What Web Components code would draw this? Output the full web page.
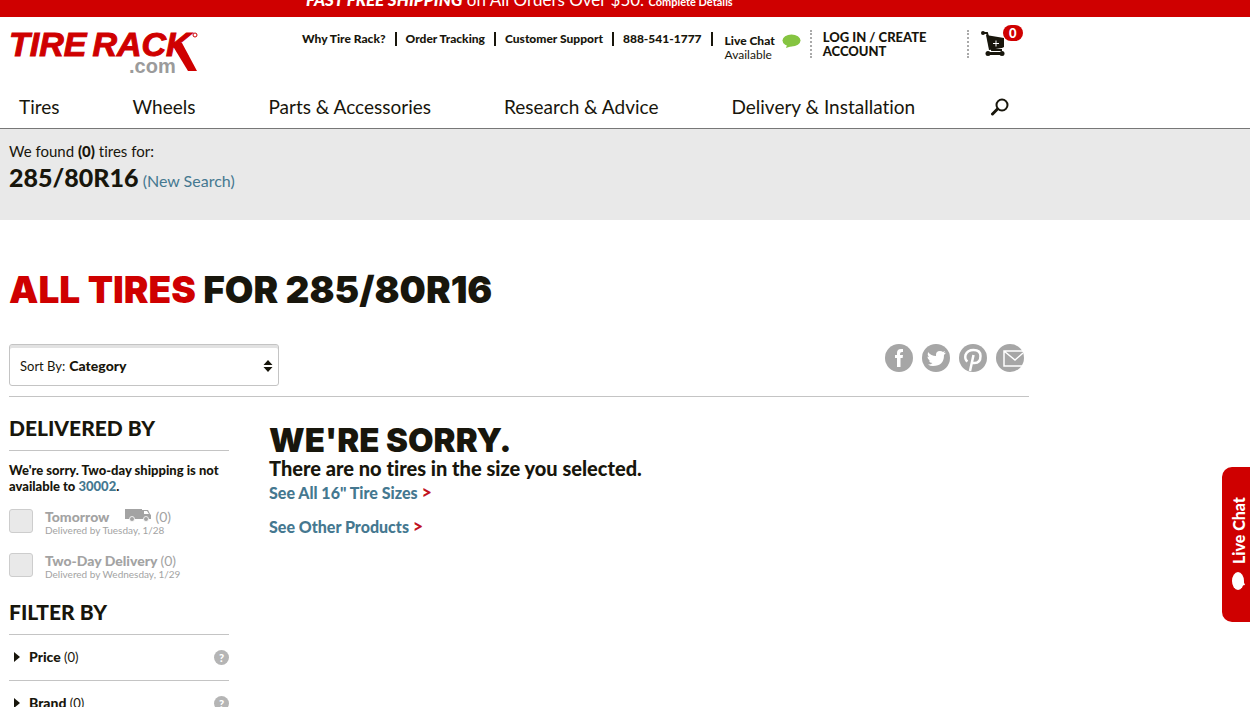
<!DOCTYPE html>
<html lang="en">
<head>
<meta charset="utf-8">
<title>Tire Rack - All Tires for 285/80R16</title>
<style>
html{scrollbar-width:none}
body{margin:0;background:#fff;color:#18160c;font:14px/20px Lato,"Liberation Sans",sans-serif;font-variant-ligatures:none;
--red:#cf0000;--blue:#457890;--rule:#c4c4c4;--mute:#a3a3a3}
</style>
</head>
<body>
<tr-page></tr-page>
<script>
function define(name, html){
  const t=document.createElement('template');
  t.innerHTML='<style>*{box-sizing:border-box}a{color:inherit;text-decoration:none}button,select{font:inherit;color:inherit}svg{display:block;flex:none}</style>'+html;
  customElements.define(name,class extends HTMLElement{
    constructor(){super();this.attachShadow({mode:'open'}).append(t.content.cloneNode(true));}
  });
}

define('tr-promo',`<style>
:host{display:flex;align-items:flex-end;height:17px;overflow:hidden;background:var(--red);color:#fff;padding-bottom:3px}
p{margin:0 0 0 306px;font-size:17px;line-height:24px;white-space:nowrap}
b{font-weight:900;font-style:italic}
a{font-size:11px;font-weight:700}
</style><p><b>FAST FREE SHIPPING</b> on All Orders Over $50. <a href="#details">Complete Details</a></p>`);

define('tr-logo',`<style>
:host{display:block;width:190px}
a{display:grid;color:var(--red);font:italic 700 34px/30px "Liberation Sans",sans-serif}
.name{display:flex;gap:6px;-webkit-text-stroke:1px var(--red)}
.com{grid-area:2/1;font:700 20px/14px "Liberation Sans",sans-serif;color:#9b9b9b;padding-left:120px}
.name,svg{grid-area:1/1}
svg{grid-area:1/1/3/2}
</style><a href="#home" aria-label="Tire Rack home"><span class="name"><span>TIRE</span><span>RACK</span></span>
<svg width="190" height="44" viewBox="0 0 190 44" fill="#cf0000"><path d="M162 14h11l15 28h-9z"/><circle cx="186" cy="6" r="2" fill="none" stroke="#cf0000"/></svg><span class="com">.com</span></a>`);

define('tr-utility',`<style>
:host{display:flex;align-items:flex-start;flex:1;font-size:12px;line-height:14px}
ul{display:flex;margin:0;padding:15px 0 0;list-style:none;font-weight:900;white-space:nowrap}
li{display:flex;padding-right:9px;margin-right:9px;border-right:2px solid #18160c;height:14px;align-items:center}
.chat{display:flex;gap:7px;padding:17px 9px 0 3px}
.chat b{display:block;font-weight:900}
.chat span{white-space:nowrap}
.acct{margin-top:13px;padding-left:11px;width:157px;height:28px;border-left:2px dotted #aaa;font-weight:900;font-size:13px}
.acct a{display:block;width:110px}
.cart{position:relative;margin-top:13px;height:28px;border-left:2px dotted #aaa;padding-left:12px}
.badge{position:absolute;left:34px;top:-5px;width:20px;height:16px;border-radius:8px;background:var(--red);color:#fff;font-weight:900;font-size:13px;line-height:16px;text-align:center}
</style>
<ul><li><a href="#why">Why Tire Rack?</a></li><li><a href="#orders">Order Tracking</a></li><li><a href="#support">Customer Support</a></li><li><a href="tel:8885411777">888-541-1777</a></li></ul>
<a class="chat" href="#chat"><span><b>Live Chat</b>Available</span><svg width="19" height="15" viewBox="0 0 19 15" fill="#85c441"><ellipse cx="9.500" cy="6.500" rx="9" ry="6"/><path d="M5 11l-1 3 6-2z"/></svg></a>
<div class="acct"><a href="#login">LOG IN / CREATE ACCOUNT</a></div>
<a class="cart" href="#cart" aria-label="Cart"><svg width="26" height="28" viewBox="0 0 26 28" fill="#18160c"><path d="M2 3h4l5 17h10" fill="none" stroke="#18160c" stroke-width="2"/><path d="M5 5l18 3v9l-2 1-13 2z"/><circle cx="2" cy="3" r="2"/><circle cx="7" cy="23.500" r="2.500"/><circle cx="21" cy="23.500" r="2.500"/><path d="M7 22h14v3H7z"/><path d="M12 13.500h6M15 10.500v6" stroke="#fff"/></svg><span class="badge">0</span></a>`);

define('tr-nav',`<style>
:host{display:block;border-bottom:1px solid #777}
nav{display:flex;gap:73px;height:41px;align-items:center;padding:0 0 1px 19px;font-size:19px;line-height:24px;white-space:nowrap}
button{border:0;background:none;padding:0}
</style><nav><a href="#tires">Tires</a><a href="#wheels">Wheels</a><a href="#parts">Parts &amp; Accessories</a><a href="#research">Research &amp; Advice</a><a href="#delivery">Delivery &amp; Installation</a>
<button aria-label="Search"><svg width="21" height="18" viewBox="0 0 21 18" fill="none" stroke="#18160c"><circle cx="14" cy="7" r="5.500" stroke-width="2"/><path d="M9.500 11l-5 5" stroke-width="3" stroke-linecap="round"/></svg></button></nav>`);

define('tr-header',`<style>
:host{display:block}
.top{display:flex;max-width:1020px;height:70px;margin-left:9px}
tr-logo{margin:12px 103px 0 0}
</style><tr-promo></tr-promo><div class="top"><tr-logo></tr-logo><tr-utility></tr-utility></div><tr-nav></tr-nav>`);

define('tr-found',`<style>
:host{display:block;background:#e9e9e9;padding:11px 9px 28px;height:91px}
p{margin:0;font-size:15px;line-height:22px}
div{line-height:30px;font-size:16px}
b{font-weight:900}
strong{font-size:25px;font-weight:900}
a{color:var(--blue)}
</style><p>We found <b>(0)</b> tires for:</p><div><strong>285/80R16</strong> <a href="#new">(New Search)</a></div>`);

define('tr-sort',`<style>
:host{display:block;width:270px}
div{display:flex;align-items:center;height:42px;border:1px solid var(--rule);border-radius:3px;box-shadow:inset 0 3px #e2e2e2;padding:2px 4px 0 10px;font-size:13px}
select{appearance:none;border:0;background:none;font-size:14px;font-weight:900;flex:1;padding:0 0 0 4px;outline:0}
</style><div><label for="s">Sort By:</label><select id="s"><option>Category</option></select>
<svg width="12" height="14" viewBox="0 0 12 14" fill="#18160c"><path d="M6 1l4.500 5h-9zM6 13l4.500-5h-9z"/></svg></div>`);

define('tr-share',`<style>
:host{display:flex;gap:9px;padding-right:5px}
svg{fill:#fff}
.d{fill:#a6a6a6}
</style>
<a href="#fb" aria-label="Facebook"><svg width="28" height="28"><circle class="d" cx="14" cy="14" r="14"/><path d="M12 23v-9h-2v-3h2V9q0-4 4-4h2v3h-1q-2 0-2 2v1h3l-.4 3H15.500v9z"/></svg></a>
<a href="#tw" aria-label="Twitter"><svg width="28" height="28"><circle class="d" cx="14" cy="14" r="14"/><path d="M6 8q3 4 8 4-.5-5 4-5 2 0 3 1l2-1-1 2 2-.3-2 2.300q0 11-11 11-3 0-5-1.500 3 0 4.500-1.500-3 0-3.500-2.500h1.500q-3-1-3-4l1.500.5Q5 11 6 8z"/></svg></a>
<a href="#pin" aria-label="Pinterest"><svg width="28" height="28"><circle class="d" cx="14" cy="14" r="14"/><path d="M8.500 17.500q-3-2-2-6.500 2-5 8-5 7 0 7 6 0 7-6 7-2 0-3-1M14.500 11L11 27" fill="none" stroke="#fff" stroke-width="2.500"/></svg></a>
<a href="#mail" aria-label="Email"><svg width="28" height="28"><circle class="d" cx="14" cy="14" r="14"/><path d="M27 7H8v15h18M8 7l11 9 8-7" fill="none" stroke="#fff" stroke-width="1.500"/></svg></a>`);

define('tr-section',`<style>
:host{display:block}
h2{margin:0;font-size:21px;line-height:24px;font-weight:900;padding-bottom:10px;border-bottom:1px solid var(--rule)}
</style><h2><slot name="title"></slot></h2><slot></slot>`);

define('tr-option',`<style>
:host{display:block;color:var(--mute);height:44px}
label{display:flex;gap:12px}
input{appearance:none;flex:none;width:24px;height:24px;margin:0;border:1px solid #cdcdcd;border-radius:3px;background:#e9e9e9}
.t{display:flex;gap:3px;font-size:14px;line-height:15px;white-space:nowrap}
b{font-weight:900}
small{display:block;font-size:10px;line-height:12px;white-space:nowrap}
</style><label><input type="checkbox" disabled><span><span class="t"><b><slot name="name"></slot></b><slot name="icon"></slot><span>(0)</span></span><small><slot></slot></small></span></label>`);

define('tr-truck',`<style>:host{display:block;padding:0 0 0 12px}</style>
<svg width="28" height="13" viewBox="0 0 28 13" fill="#a3a3a3"><path d="M1 0h17v10H1zM18 1h6l2 4 1 1v4h-9z"/><path d="M20 2h3l2 3h-5z" fill="#fff"/><g stroke="#fff" stroke-width=".8"><circle cx="8" cy="10" r="2.500"/><circle cx="22" cy="10" r="2.500"/></g></svg>`);

define('tr-filter',`<style>
:host{display:flex;align-items:center;height:46px;border-bottom:1px solid var(--rule)}
button{display:flex;align-items:center;gap:8px;padding:0 0 2px 5px;border:0;background:none;flex:1;font-size:13px;line-height:18px;text-align:left}
b{font-weight:900;font-size:14px}
a{width:15px;height:15px;border-radius:8px;background:#b5b5b5;color:#fff;font-size:11px;line-height:15px;font-weight:900;text-align:center}
</style><button aria-expanded="false"><svg width="7" height="10" viewBox="0 0 7 10" fill="#18160c"><path d="M0 0l6 5-6 5z"/></svg><span><b><slot></slot></b> (0)</span></button><a href="#help">?</a>`);

define('tr-sidebar',`<style>
:host{display:block;flex:none;width:220px}
p{margin:11px 0 15px;font-size:13px;line-height:16px;font-weight:900;white-space:nowrap}
p a{color:var(--blue)}
.f{margin-top:3px}
</style>
<tr-section><span slot="title">DELIVERED BY</span>
<p>We're sorry. Two-day shipping is not<br>available to <a href="#zip">30002</a>.</p>
<tr-option><span slot="name">Tomorrow</span><tr-truck slot="icon"></tr-truck>Delivered by Tuesday, 1/28</tr-option>
<tr-option><span slot="name">Two-Day Delivery</span>Delivered by Wednesday, 1/29</tr-option></tr-section>
<tr-section class="f"><span slot="title">FILTER BY</span><tr-filter>Price</tr-filter><tr-filter>Brand</tr-filter></tr-section>`);

define('tr-empty',`<style>
:host{display:block;padding-top:6px;font-weight:900}
h2{margin:0;font:900 33px/36px Inter,Lato,sans-serif}
h3{margin:0;font-size:20px;line-height:20px;font-weight:900}
p{margin:2px 0 9px;font-size:16px;line-height:24px}
a{color:var(--blue)} i{font-style:normal;font-size:18px;color:#c1121f}
</style><h2>WE'RE SORRY.</h2><h3>There are no tires in the size you selected.</h3>
<p><a href="#16">See All 16" Tire Sizes</a> <i>&gt;</i></p><p><a href="#other">See Other Products</a> <i>&gt;</i></p>`);

define('tr-chat-tab',`<style>
:host{position:fixed;right:0;bottom:85px}
button{display:flex;align-items:center;justify-content:center;gap:7px;width:28px;height:155px;padding:0 5px 0 0;border:0;border-radius:0 10px 10px 0;background:var(--red);color:#fff;font-size:16px;line-height:20px;font-weight:900;writing-mode:vertical-rl;transform:rotate(180deg)}
svg{transform:rotate(180deg)}
</style><button><svg width="15" height="20" viewBox="0 0 15 20" fill="#fff"><ellipse cx="7" cy="10" rx="6" ry="9"/><path d="M9 15l5-1-2-5z"/></svg>Live Chat</button>`);

define('tr-page',`<style>
:host{display:block}
main{max-width:1020px;margin:0 9px}
h1{margin:48px 0 33px;font:900 37px/43px Inter,Lato,sans-serif}
h1 span{color:var(--red)}
.bar{display:flex;justify-content:space-between;padding-bottom:10px;border-bottom:1px solid var(--rule)}
.cols{display:flex;gap:40px;padding-top:19px}
</style><tr-header></tr-header><tr-found></tr-found>
<main><h1><span>ALL TIRES</span> FOR 285/80R16</h1>
<div class="bar"><tr-sort></tr-sort><tr-share></tr-share></div>
<div class="cols"><tr-sidebar></tr-sidebar><tr-empty></tr-empty></div></main>
<tr-chat-tab></tr-chat-tab>`);
</script>
</body>
</html>
